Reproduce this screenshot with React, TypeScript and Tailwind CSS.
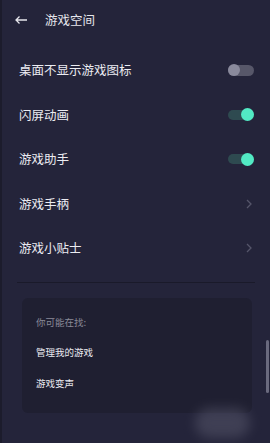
import React from "react";

const font = { fontFamily: '"Noto Sans CJK SC", "Noto Sans", sans-serif' };

function Toggle({ on }: { on: boolean }) {
  return on ? (
    <div className="relative w-[26px] h-[10px] rounded-full bg-[#2e4a50]">
      <div className="absolute right-0 top-[-1.5px] w-[13px] h-[13px] rounded-full bg-[#52eac4]" />
    </div>
  ) : (
    <div className="relative w-[26px] h-[11px] rounded-full bg-[#575769]">
      <div className="absolute left-0 top-[-0.5px] w-[12px] h-[12px] rounded-full bg-[#8a8a9c]" />
    </div>
  );
}

function Chevron() {
  return (
    <svg width="6" height="10" viewBox="0 0 6 10" className="mr-[2px]">
      <path d="M1 1l4 4-4 4" stroke="#55556a" strokeWidth="1.3" fill="none" />
    </svg>
  );
}

function Row({ label, right }: { label: string; right: React.ReactNode }) {
  return (
    <div className="h-[44.5px] flex items-center justify-between pl-[19px] pr-[16px]">
      <span className="text-[12.5px] text-[#ececf2] leading-none">{label}</span>
      {right}
    </div>
  );
}

export default function App() {
  return (
    <div className="relative w-[270px] h-[443px] bg-[#24243a] overflow-hidden" style={font}>
      <div className="flex items-center h-[40px] pl-[14px]">
        <svg width="14" height="10" viewBox="0 0 14 10">
          <path d="M13 5H2M5.5 1.5L2 5l3.5 3.5" stroke="#e6e6ec" strokeWidth="1.3" fill="none" />
        </svg>
        <span className="ml-[17px] text-[12.5px] text-[#e6e6ec]">游戏空间</span>
      </div>
      <div className="pt-[8px]">
        <Row label="桌面不显示游戏图标" right={<Toggle on={false} />} />
        <Row label="闪屏动画" right={<Toggle on />} />
        <Row label="游戏助手" right={<Toggle on />} />
        <Row label="游戏手柄" right={<Chevron />} />
        <Row label="游戏小贴士" right={<Chevron />} />
      </div>
      <div className="ml-[17px] mr-[15px] mt-[11px] h-px bg-[#1a1a2a]" />
      <div className="ml-[22px] mr-[18px] mt-[15px] h-[115px] rounded-[6px] bg-[#1f1f31] pl-[14px] pt-[20px]">
        <div className="text-[9.5px] text-[#8a8a98] leading-none">你可能在找:</div>
        <div className="mt-[21px] text-[9.5px] text-[#ececf2] leading-none">管理我的游戏</div>
        <div className="mt-[21px] text-[9.5px] text-[#ececf2] leading-none">游戏变声</div>
      </div>
      <div className="absolute left-0 top-0 w-[2px] h-full bg-[#1c1c2c]" />
      <div className="absolute right-[1px] top-[340px] w-[3px] h-[53px] rounded-full bg-[#6a6a7e]" />
      <div className="absolute left-[195px] top-[408px] w-[55px] h-[30px] rounded-full bg-[#5a5a6e] opacity-50 blur-[6px]" />
    </div>
  );
}
